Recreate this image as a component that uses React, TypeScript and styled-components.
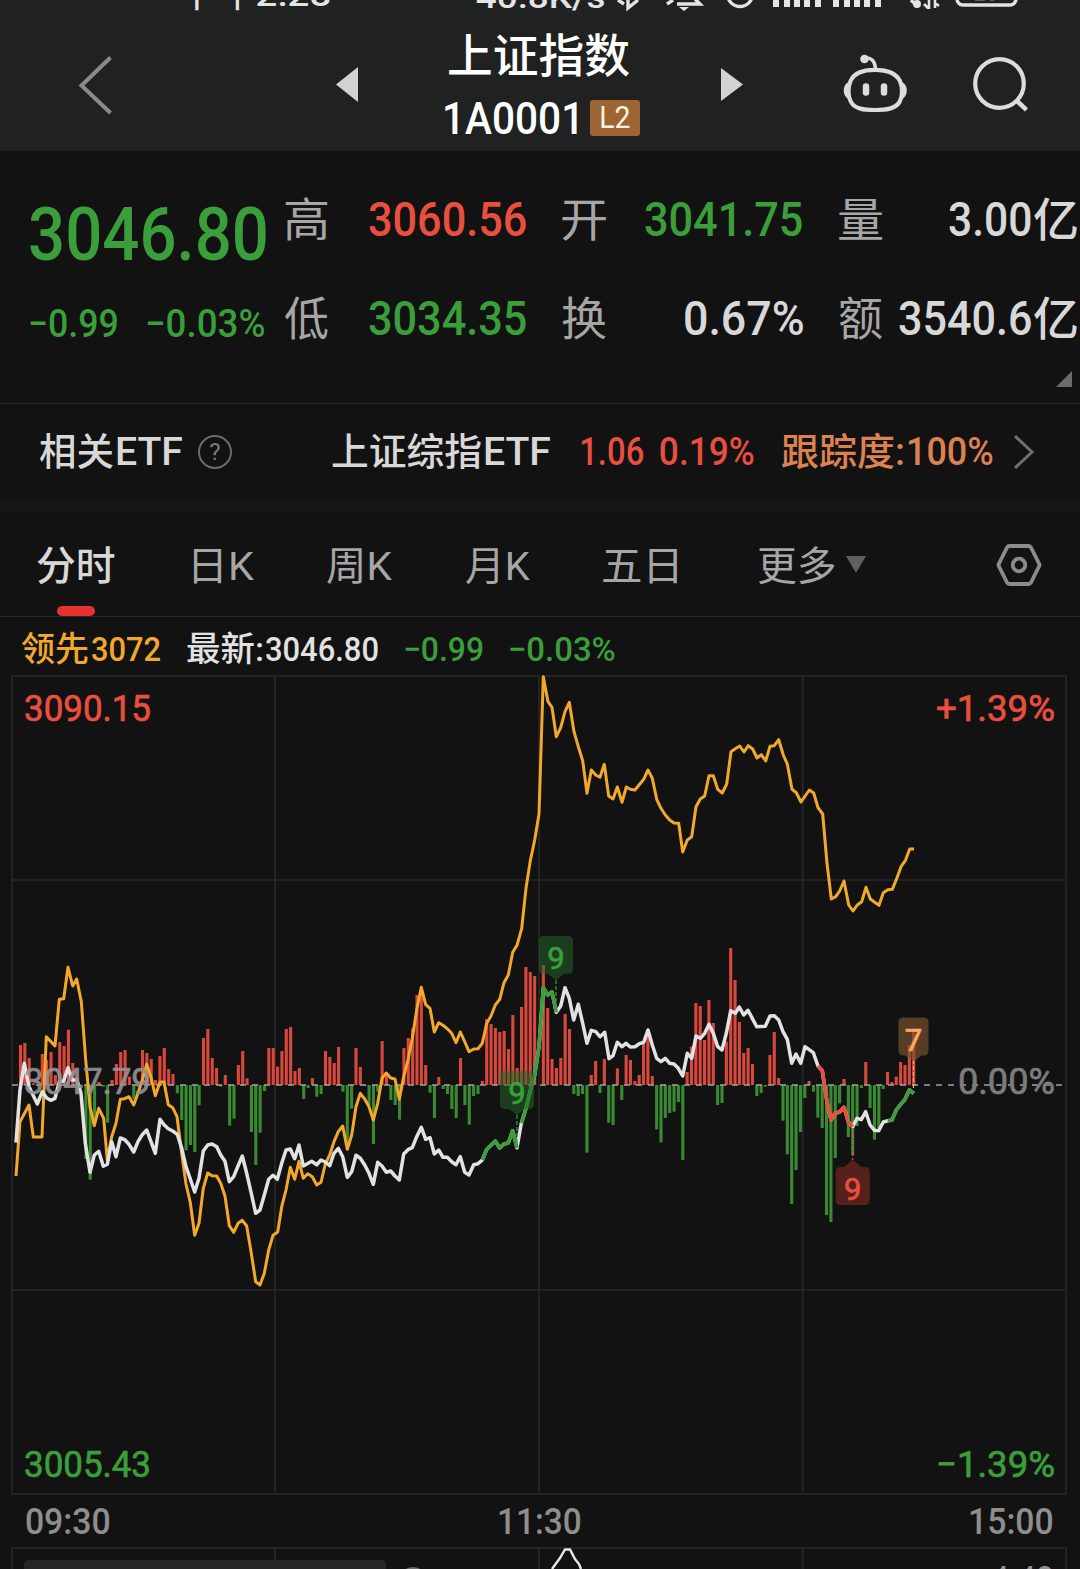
import React, { useLayoutEffect, useRef, useState } from "react";
import styled, { createGlobalStyle } from "styled-components";

const color = {
  bg: "#121212",
  header: "#202221",
  line: "#2a2a2a",
  red: "#e94f3e",
  green: "#3a9f3a",
  bright: "#d8d8d8",
  muted: "#a6a6a6",
  gold: "#f2a92b",
  copper: "#dc8150",
};

const GlobalStyle = createGlobalStyle`
  * { box-sizing: border-box; }
  body {
    margin: 0;
    background: ${color.bg};
    font-family: Roboto, "Noto Sans CJK SC", sans-serif;
    overflow: hidden;
  }
  svg { display: block; flex: none; }
`;

/* ---------- text set to a fixed ink width ---------- */

const FitBox = styled.span<{ $w: number; $size: number; $ml?: number; $color?: string; $weight?: number }>`
  flex: none;
  display: block;
  width: ${(p) => p.$w}px;
  margin-left: ${(p) => p.$ml ?? 0}px;
  padding-top: 2px;
  font-size: ${(p) => p.$size}px;
  line-height: 1.2;
  font-weight: ${(p) => p.$weight ?? 400};
  color: ${(p) => p.$color ?? "inherit"};
  white-space: nowrap;
`;

const FitInk = styled.span`
  display: inline-block;
  transform-origin: 0 50%;
`;

interface FitProps {
  w: number;
  size: number;
  ml?: number;
  color?: string;
  weight?: number;
  children: string;
}

function Fit({ w, size, ml, color: c, weight, children }: FitProps) {
  const ref = useRef<HTMLSpanElement>(null);
  const [transform, setTransform] = useState("none");
  useLayoutEffect(() => {
    const el = ref.current;
    const ctx = document.createElement("canvas").getContext("2d");
    if (!el || !ctx) return;
    const cs = getComputedStyle(el);
    ctx.font = `${cs.fontWeight} ${cs.fontSize} ${cs.fontFamily}`;
    const m = ctx.measureText(children);
    const ink = m.actualBoundingBoxRight + m.actualBoundingBoxLeft;
    const k = w / ink;
    const nudge = /^[\d−]/.test(children) ? 0.8 : 0;
    setTransform(`translateX(${m.actualBoundingBoxLeft * k + nudge}px) scaleX(${k})`);
  }, [w, size, weight, children]);
  return (
    <FitBox $w={w} $size={size} $ml={ml} $color={c} $weight={weight}>
      <FitInk ref={ref} style={{ transform }}>
        {children}
      </FitInk>
    </FitBox>
  );
}

/* ---------- layout parts ---------- */

const Screen = styled.main`
  width: 1080px;
  height: 1569px;
  overflow: hidden;
  display: flex;
  flex-direction: column;
  background: ${color.bg};
`;

const StatusBar = styled.div`
  flex: none;
  height: 11px;
  overflow: hidden;
  display: flex;
  align-items: flex-end;
  background: ${color.header};
  color: #e4e4e4;
`;

const StatusText = styled.div<{ $ml: number }>`
  flex: none;
  display: flex;
  margin-left: ${(p) => p.$ml}px;
  margin-bottom: -5px;
`;

const StatusIcons = styled.svg`
  margin-left: 6px;
`;

const Header = styled.header`
  flex: none;
  height: 140px;
  display: flex;
  align-items: flex-start;
  background: ${color.header};
`;

const IconSlot = styled.button<{ $ml: number; $mt: number }>`
  flex: none;
  padding: 0;
  border: 0;
  background: none;
  margin: ${(p) => p.$mt}px 0 0 ${(p) => p.$ml}px;
`;

const TitleBlock = styled.div`
  flex: none;
  width: 200px;
  margin-left: 84px;
  padding-top: 16px;
  color: #fff;
`;

const CodeRow = styled.div`
  height: 54px;
  margin-top: 7px;
  display: flex;
  align-items: center;
`;

const LevelBadge = styled.span`
  flex: none;
  width: 50px;
  height: 36px;
  margin-left: 14px;
  padding-bottom: 3px;
  display: flex;
  align-items: center;
  border-radius: 3px;
  background: #9e6434;
`;

const Quote = styled.section`
  flex: none;
  height: 253px;
  padding-top: 19px;
  border-bottom: 1px solid ${color.line};
  display: flex;
  flex-wrap: nowrap;
`;

const PriceColumn = styled.div`
  flex: none;
  width: 284px;
  padding-left: 29px;
`;

const BigPrice = styled.div`
  height: 125px;
  display: flex;
  align-items: center;
`;

const ChangeRow = styled.div`
  height: 56px;
  display: flex;
  align-items: center;
`;

const Stats = styled.div`
  flex: none;
  width: 796px;
`;

const StatRow = styled.div`
  height: 99px;
  display: flex;
  align-items: center;
`;

const MoreCorner = styled.div`
  display: flex;
  justify-content: flex-end;
  padding: 3px 8px 0 0;
`;

const EtfRow = styled.section`
  flex: none;
  height: 96px;
  display: flex;
  align-items: center;
  padding-left: 39px;
`;

const EtfArrow = styled.svg`
  margin-left: 19px;
`;

const Help = styled.span`
  flex: none;
  width: 34px;
  height: 34px;
  margin-left: 16px;
  border: 2px solid #6c6c6c;
  border-radius: 50%;
  display: flex;
  align-items: center;
  justify-content: center;
  font-size: 24px;
  color: #7c7c7c;
`;

const Divider = styled.div`
  flex: none;
  height: 13px;
  background: #171717;
`;

const Tabs = styled.nav`
  flex: none;
  height: 104px;
  display: flex;
  align-items: stretch;
  border-bottom: 1px solid ${color.line};
`;

const Tab = styled.div<{ $ml: number; $active?: boolean }>`
  flex: none;
  margin-left: ${(p) => p.$ml}px;
  display: flex;
  flex-direction: column;
  align-items: center;
  justify-content: space-between;
  padding-top: 28px;
  color: ${(p) => (p.$active ? color.bright : color.muted)};
`;

const TabMark = styled.span`
  width: 38px;
  height: 10px;
  border-radius: 5px;
  background: #e83232;
`;

const TabIcon = styled.span<{ $ml: number }>`
  display: flex;
  align-items: center;
  margin-left: ${(p) => p.$ml}px;
`;

const Legend = styled.div`
  flex: none;
  height: 53px;
  padding: 10px 0 0 21px;
  display: flex;
  align-items: flex-start;
`;

const TimeAxis = styled.div`
  flex: none;
  height: 43px;
  display: flex;
  align-items: center;
  color: #8e8e8e;
`;

const ChartLabel = styled.text<{ $size?: number }>`
  font-family: Roboto, sans-serif;
  font-size: ${(p) => p.$size ?? 37}px;
`;

/* ---------- chart data ---------- */

// One entry per minute; positive bars rise from the zero line, negative fall (thirds of a pixel).
const volumes = [
  0, 120, 126, 81, 5, 0, 93, 75, 99, 30, 129, 117, 166, 66, 20, 0, -222, -284, -105, 9, -5, -113, 15, 63, 99, 105, 25,
  -42, -5, 105, 96, 78, 15, 87, 111, 48, 33, -25, -105, -196, -180, -201, -61, 141, 168, 81, 51, -5, 30, -122, -101, 60,
  102, 20, -141, -240, -143, -18, 111, 111, 55, 102, 168, 174, 42, 51, -42, -9, 21, -35, -27, 102, 84, 66, 114, -20,
  -180, -71, 111, 54, -3, -60, -177, -20, 132, 36, -45, -60, -104, 111, 141, 170, 270, 280, 60, -23, -99, 24, -12, -27,
  -72, -99, 81, -60, -119, -33, -27, 12, 198, 183, 171, 159, 162, 108, 210, 51, 234, 354, 339, 327, 0, 360, 231, 78, 51,
  81, 213, 168, -27, -33, -27, -203, 30, 72, -24, 78, -113, -120, 50, -45, 90, 75, 12, 30, 123, 150, 27, -133, -172,
  -99, -84, -80, -51, -225, 39, 115, 246, 237, 135, 255, 186, -60, -54, 130, 411, 315, 189, 96, 111, 63, -33, -24, -5,
  90, 159, 21, -107, -208, -357, -255, -141, -39, 12, -20, -98, -129, -390, -411, -219, -55, 18, -156, -210, -123, -9,
  69, -69, -164, -129, -12, 39, 9, 25, 69, 60, 120, 160,
];

const ZERO = 1085;
const minuteX = (i: number) => 16 + i * 4.357;

// A trace piece holds its origin and its points, in thirds of a pixel from that origin.
type Piece = [number, number, string];
const trace = (pieces: Piece[]) =>
  pieces
    .flatMap(([ox, oy, pts]) =>
      pts.split(" ").map((p) => {
        const [x, y] = p.split(",").map(Number);
        return `${(ox + x / 3).toFixed(1)},${(oy + y / 3).toFixed(1)}`;
      })
    )
    .join(" ");

const leadLine = trace([
  [0, 940, "48,708 60,545 87,495 100,591 126,591 139,290 165,318 178,178 191,176 204,82 218,138 230,117 244,185 257,360 270,500 283,557 296,505 311,535 322,660 335,590 348,550 361,478 374,476 387,470 401,495 414,460 427,420 440,373 453,412 466,467 480,426 492,426 505,494 518,503 531,530 545,640 558,732 571,788 584,886 597,850 610,745 623,699 636,707 650,708 662,730 675,768 688,857 701,877 714,850 727,841 740,858 754,940 767,1025 780,1035 793,1000 806,930 819,886"],
  [270, 960, "23,816 35,740 48,690 61,622 74,658 87,604 100,655 113,641 127,650 140,675 153,667 166,612 179,585 192,545 205,515 218,498 232,568 245,525 258,440 271,400 284,417 297,440 310,480 323,430 336,355 349,339 362,354 375,357 388,418 401,350 414,300 427,235 440,150 454,82 467,134 480,145 493,216 506,188 519,196 532,206 545,220 558,248 571,216 584,245 597,275 611,267 624,266 637,250 650,190 663,168 676,135 689,118 702,68"],
  [500, 670, "25,915 38,847 51,826 65,775 78,655 91,572 104,510 117,432 130,20 144,95 156,112 169,200 182,173 195,125 208,97 222,185 235,230 248,272 261,370 274,300 287,315 300,322 313,283 326,378 339,387 352,351 366,397 379,351 391,358 405,360 431,328 444,300 457,325 470,388 483,415 496,435 509,450 522,459 536,460 548,546 562,510 575,500 588,410 601,387 614,378 627,317 640,317 653,358 667,369 680,342 693,245 706,236 719,228 732,246 745,227 758,237 771,264 784,254 797,273"],
  [700, 670, "210,229 223,227 236,209 250,255 262,282 276,358 289,368 303,396 328,360 341,369 354,413 368,432 381,580 394,687 407,680 419,663 432,633 446,705 459,723 472,705 485,695 498,652 511,687 524,697 537,706 550,668 563,659 577,658 590,626 603,590 616,572 629,537 642,537"],
]);

const priceLine = trace([
  [0, 940, "48,608 60,450 73,370 87,440 112,492 127,455 140,474 152,481 165,475 178,425 191,423 204,383 217,420 231,420 243,460 256,610 270,697 283,645 296,634 310,679 322,673 335,605 348,650 361,594 374,599 387,613 401,636 414,605 427,584 440,570 453,605 466,640 480,538 492,554 505,566 518,573 532,583 545,625 558,680 571,717 584,756 597,715 610,633 623,615 636,612 650,620 662,645 675,664 688,725 701,710 714,678 727,648 740,700 754,760 767,820 780,810 793,765 806,718 819,706"],
  [270, 960, "9,646 22,658 35,610 48,570 61,567 74,596 87,555 100,618 125,604 140,614 153,600 166,606 179,617 192,580 205,565 218,590 232,652 245,635 258,586 271,595 284,615 297,640 310,673 323,607 336,618 349,637 362,633 375,648 388,660 401,582 414,569 427,563 440,530 454,502 467,538 480,533 493,582 506,570 519,592 532,592 545,605 558,614 571,590 584,637 597,645 611,614 624,611 637,600 650,568 663,556 676,543 689,564 702,552 715,549 728,512 741,563 754,490"],
  [500, 930, "78,535 91,482 104,435 117,350 130,173 143,195 156,186 169,247 182,228 195,173 208,205 221,270 235,223 248,280 261,340 274,301 287,305 300,320 314,307 327,386 339,377 352,337 366,350 378,340 391,351 405,350 418,341 431,337 444,300 457,345 470,385 483,395 496,385 509,400 522,402 535,415 548,438 562,370 575,385 588,318 601,325 614,310 627,283 640,310 653,350 666,360 679,310 692,242 706,250"],
  [720, 920, "58,261 71,285 84,271 97,295 110,320 136,319 150,288 163,287 176,300 189,335 202,358 215,430 228,402 242,430 255,380 280,398 294,438 307,452 320,540 333,600 346,580 359,576 372,562 385,605 398,620 411,595 424,599 437,575 450,614 463,631 476,632 490,606 503,602 516,600 529,570 542,553 555,538 568,510 581,520"],
]);

const signalLines = [
  { stroke: color.green, points: trace([[270, 960, "637,600 650,568 663,556 676,543 689,564 702,552 715,549 728,512 741,563"]]) },
  { stroke: color.green, points: trace([[500, 930, "65,580 78,535 91,482 104,435 117,350 130,173 143,195 156,186 169,247"]]) },
  { stroke: color.red, points: trace([[720, 920, "294,438 307,452 320,540 333,600 346,580 359,576 372,562 385,605 398,620"]]) },
  { stroke: color.green, points: trace([[720, 920, "503,602 516,600 529,570 542,553 555,538 568,510 581,520"]]) },
];

interface MarkerProps {
  x: number;
  top: number;
  w?: number;
  label: string;
  ink: string;
  fill: string;
  stem: [number, number];
  up?: boolean;
}

function Marker({ x, top, w = 34, label, ink, fill, stem, up }: MarkerProps) {
  const l = x - w / 2;
  const r = x + w / 2;
  const b = top + 38;
  const d = up
    ? `M${l + 5} ${top}H${x - 9}L${x} ${top - 7}L${x + 9} ${top}H${r - 5}q5 0 5 5V${b - 5}q0 5 -5 5H${l + 5}q-5 0 -5 -5V${top + 5}q0 -5 5 -5z`
    : `M${l + 5} ${top}H${r - 5}q5 0 5 5V${b - 5}q0 5 -5 5H${x + 8}L${x} ${b + 6}L${x - 8} ${b}H${l + 5}q-5 0 -5 -5V${top + 5}q0 -5 5 -5z`;
  return (
    <g>
      <path d={`M${x} ${stem[0]}V${stem[1]}`} stroke={ink} strokeWidth="1.2" strokeDasharray="4 2" />
      <path d={d} fill={fill} />
      <ChartLabel $size={31} x={x} y={top + 33} textAnchor="middle" fill={ink} stroke={ink} strokeWidth="0.7">
        {label}
      </ChartLabel>
    </g>
  );
}

interface ScaleLabelProps {
  x: number;
  y: number;
  w: number;
  ink: string;
  opacity?: number;
  children: string;
}

function ScaleLabel({ x, y, w, ink, opacity = 1, children }: ScaleLabelProps) {
  return (
    <ChartLabel x={x} y={y} textLength={w} lengthAdjust="spacingAndGlyphs" fill={ink} stroke={ink} strokeWidth="0.7" opacity={opacity}>
      {children}
    </ChartLabel>
  );
}

function MinuteChart() {
  return (
    <svg width="1080" height="830" viewBox="0 670 1080 830">
      <g stroke="#282828" strokeWidth="1.6" fill="none">
        <rect x="12" y="676" width="1054" height="818" />
        <path d="M12 880H1066M12 1290H1066M275 676V1494M539 676V1494M802.7 676V1494" />
      </g>
      {volumes.map((v, i) =>
        v ? (
          <rect
            key={i}
            x={minuteX(i) - 1.4}
            width="3.1"
            y={v > 0 ? ZERO - v / 3 : ZERO}
            height={Math.abs(v) / 3}
            fill={v > 0 ? "#d8483c" : "#398a32"}
          />
        ) : null
      )}
      <path d="M12 1085H1062" stroke="#a2a2a2" strokeWidth="1.5" strokeDasharray="6 6" />
      <g fill="none" strokeLinejoin="round">
        <polyline points={leadLine} stroke={color.gold} strokeWidth="3" />
        <polyline points={priceLine} stroke="#e2e2e2" strokeWidth="3.5" />
        {signalLines.map((s, i) => (
          <polyline key={i} points={s.points} stroke={s.stroke} strokeWidth="3.6" />
        ))}
      </g>
      <ScaleLabel x={24} y={721} w={127} ink={color.red}>3090.15</ScaleLabel>
      <ScaleLabel x={936} y={721} w={119} ink={color.red}>+1.39%</ScaleLabel>
      <ScaleLabel x={24} y={1093.5} w={127} ink="#949494" opacity={0.9}>3047.79</ScaleLabel>
      <ScaleLabel x={958} y={1093.5} w={97} ink="#7c7c7c">0.00%</ScaleLabel>
      <ScaleLabel x={24} y={1477} w={127} ink={color.green}>3005.43</ScaleLabel>
      <ScaleLabel x={936} y={1477} w={119} ink={color.green}>−1.39%</ScaleLabel>
      <Marker x={556} top={936} label="9" ink={color.green} fill="rgba(36,106,42,.52)" stem={[980, 1012]} />
      <Marker x={517} top={1071} label="9" ink={color.green} fill="rgba(36,106,42,.52)" stem={[1115, 1148]} />
      <Marker x={852.7} top={1167} label="9" ink={color.red} fill="#56211c" stem={[1128, 1160]} up />
      <Marker x={913.5} top={1017.5} w={30} label="7" ink="#ffa862" fill="rgba(122,82,48,.68)" stem={[1060, 1090]} />
    </svg>
  );
}

/* ---------- screen ---------- */

export default function App() {
  return (
    <>
      <GlobalStyle />
      <Screen>
        <StatusBar>
          <StatusText $ml={179}>
            <Fit w={77} size={33}>下午</Fit>
            <Fit w={73} size={32} weight={500}>2:28</Fit>
          </StatusText>
          <StatusText $ml={146}>
            <Fit w={129} size={32} weight={500}>40.8K/s</Fit>
          </StatusText>
          <StatusIcons width="470" height="11" viewBox="610 0 470 11" fill="none" stroke="#e4e4e4" strokeWidth="3.4">
            <path d="M618 0L624 4M628 0V8L638 0" />
            <path d="M667 4L673 0M677 4H700L695 -1" />
            <path d="M679 7H689L684 11Z" fill="#e4e4e4" stroke="none" />
            <circle cx="740" cy="-6" r="12.5" />
            <path d="M776 0V7M787 0V7M797 0V7M807 0V7M818 0V7M836 0V7M847 0V7M857 0V7M867 0V7M878 0V7" strokeWidth="6" />
            <path d="M911 0L914 3" />
            <circle cx="917" cy="4" r="4" fill="#e4e4e4" stroke="none" />
            <path d="M929 0V9M935 0V8M924 4L928 8M934 2L939 6" strokeWidth="2.6" />
            <rect x="957" y="-20" width="59" height="25" rx="6" />
            <path d="M975 0H985M990 0L994 0" strokeWidth="1.5" stroke="#777" />
          </StatusIcons>
        </StatusBar>

        <Header>
          <IconSlot $ml={78} $mt={43} aria-label="返回">
            <svg width="36" height="62" viewBox="78 54 36 62" fill="none" stroke="#8a8a8a" strokeWidth="4">
              <path d="M110.5 57.5L81.5 85.5L110.5 113" />
            </svg>
          </IconSlot>
          <IconSlot $ml={222} $mt={56} aria-label="上一个">
            <svg width="22" height="35" viewBox="0 0 22 35" fill="#d2d2d2">
              <path d="M22 0V35L0 17.5Z" />
            </svg>
          </IconSlot>
          <TitleBlock>
            <Fit w={180} size={46} weight={500} ml={7}>上证指数</Fit>
            <CodeRow>
              <Fit w={132} size={44} weight={500} ml={2}>1A0001</Fit>
              <LevelBadge>
                <Fit w={29} size={31} ml={11} color="#fff3e0">L2</Fit>
              </LevelBadge>
            </CodeRow>
          </TitleBlock>
          <IconSlot $ml={79} $mt={57} aria-label="下一个">
            <svg width="22" height="33" viewBox="0 0 22 33" fill="#d2d2d2">
              <path d="M0 0L22 16.5L0 33Z" />
            </svg>
          </IconSlot>
          <IconSlot $ml={99} $mt={42} aria-label="助手">
            <svg width="66" height="62" viewBox="842 53 66 62" fill="none" stroke="#dcdcdc" strokeWidth="4.2">
              <circle cx="864.5" cy="59" r="4.3" fill="#dcdcdc" stroke="none" />
              <path d="M864 58.5C871 56.5 875 61 875.5 69" strokeWidth="3.6" />
              <path d="M875 69.8C862 69.8 854 73 850.5 81C847.5 88 848 97 851 102C855 109 864 110 875 110C886 110 895 109 899.5 102C902.5 97 903 88 900 81C896 73 888 69.8 875 69.8Z" />
              <path d="M849 82C842 84 842 97 849 99Z" fill="#dcdcdc" stroke="none" />
              <path d="M901.5 82C908.5 84 908.5 97 901.5 99Z" fill="#dcdcdc" stroke="none" />
              <path d="M866 86.5V92.5M884 86.5V92.5" strokeWidth="6.5" strokeLinecap="round" />
            </svg>
          </IconSlot>
          <IconSlot $ml={63} $mt={44} aria-label="搜索">
            <svg width="60" height="60" viewBox="971 55 60 60" fill="none" stroke="#dcdcdc" strokeWidth="4.2">
              <circle cx="999.5" cy="83.5" r="24.3" />
              <path d="M1017 101L1026.5 109.8" strokeWidth="4.5" />
            </svg>
          </IconSlot>
        </Header>

        <Quote>
          <PriceColumn>
            <BigPrice>
              <Fit w={236} size={75} weight={500} color={color.green}>3046.80</Fit>
            </BigPrice>
            <ChangeRow>
              <Fit w={87} size={39} weight={500} color={color.green}>−0.99</Fit>
              <Fit w={117} size={39} weight={500} ml={30} color={color.green}>−0.03%</Fit>
            </ChangeRow>
          </PriceColumn>
          <Stats>
            <StatRow>
              <Fit w={43} size={46} ml={1} color={color.muted}>高</Fit>
              <Fit w={157} size={49} weight={500} ml={40} color={color.red}>3060.56</Fit>
              <Fit w={44} size={46} ml={37} color={color.muted}>开</Fit>
              <Fit w={157} size={49} weight={500} ml={38} color={color.green}>3041.75</Fit>
              <Fit w={43} size={46} ml={38} color={color.muted}>量</Fit>
              <Fit w={82} size={49} weight={500} ml={66} color={color.bright}>3.00</Fit>
              <Fit w={43} size={46} weight={500} ml={4} color={color.bright}>亿</Fit>
            </StatRow>
            <StatRow>
              <Fit w={43} size={46} ml={1} color={color.muted}>低</Fit>
              <Fit w={157} size={49} weight={500} ml={40} color={color.green}>3034.35</Fit>
              <Fit w={44} size={46} ml={37} color={color.muted}>换</Fit>
              <Fit w={118} size={49} weight={500} ml={78} color={color.bright}>0.67%</Fit>
              <Fit w={43} size={46} ml={37} color={color.muted}>额</Fit>
              <Fit w={132} size={49} weight={500} ml={16} color={color.bright}>3540.6</Fit>
              <Fit w={43} size={46} weight={500} ml={4} color={color.bright}>亿</Fit>
            </StatRow>
            <MoreCorner>
              <svg width="16" height="16" viewBox="0 0 16 16" fill="#6c6c6c">
                <path d="M16 0V16H0Z" />
              </svg>
            </MoreCorner>
          </Stats>
        </Quote>

        <EtfRow>
          <Fit w={74} size={38} weight={500} color={color.bright}>相关</Fit>
          <Fit w={65} size={38} weight={500} ml={4} color={color.bright}>ETF</Fit>
          <Help>?</Help>
          <Fit w={149} size={38} weight={500} ml={100} color={color.bright}>上证综指</Fit>
          <Fit w={65} size={38} weight={500} ml={4} color={color.bright}>ETF</Fit>
          <Fit w={62} size={38} weight={500} ml={31} color={color.red}>1.06</Fit>
          <Fit w={94} size={38} weight={500} ml={16} color={color.red}>0.19%</Fit>
          <Fit w={121} size={38} weight={500} ml={29} color={color.copper}>跟踪度:</Fit>
          <Fit w={84} size={38} weight={500} ml={5} color={color.copper}>100%</Fit>
          <EtfArrow width="24" height="38" viewBox="-3 -3 24 38" fill="none" stroke="#707070" strokeWidth="3">
            <path d="M1 0L18 16L1 32" />
          </EtfArrow>
        </EtfRow>
        <Divider />

        <Tabs>
          <Tab $ml={37} $active>
            <Fit w={78} size={39.5} weight={500}>分时</Fit>
            <TabMark />
          </Tab>
          <Tab $ml={78}>
            <Fit w={61} size={39.5}>日K</Fit>
          </Tab>
          <Tab $ml={73}>
            <Fit w={65} size={39.5}>周K</Fit>
          </Tab>
          <Tab $ml={74}>
            <Fit w={64} size={39.5}>月K</Fit>
          </Tab>
          <Tab $ml={73}>
            <Fit w={74} size={39.5}>五日</Fit>
          </Tab>
          <Tab $ml={81}>
            <Fit w={77} size={39.5}>更多</Fit>
          </Tab>
          <TabIcon $ml={11}>
            <svg width="20" height="17" viewBox="0 0 20 17" fill="#606060">
              <path d="M0 0H20L10 17Z" />
            </svg>
          </TabIcon>
          <TabIcon $ml={130}>
            <svg width="46" height="44" viewBox="0 0 46 44" fill="none" stroke="#8c8c8c" strokeWidth="3.8" strokeLinejoin="round">
              <path d="M13.5 3H32.5Q34 3 35 4.5L43 20.5Q44 22 43 23.5L35 39.5Q34 41 32.5 41H13.5Q12 41 11 39.5L3 23.5Q2 22 3 20.5L11 4.5Q12 3 13.5 3Z" />
              <circle cx="23" cy="22" r="6.3" />
            </svg>
          </TabIcon>
        </Tabs>

        <Legend>
          <Fit w={67} size={34} weight={500} color={color.gold}>领先</Fit>
          <Fit w={69} size={34} ml={3} weight={500} color={color.gold}>3072</Fit>
          <Fit w={75} size={34} ml={27} weight={500} color="#e2e2e2">最新:</Fit>
          <Fit w={112} size={34} ml={3} weight={500} color="#e2e2e2">3046.80</Fit>
          <Fit w={78} size={34} ml={27} weight={500} color={color.green}>−0.99</Fit>
          <Fit w={105} size={34} ml={27} weight={500} color={color.green}>−0.03%</Fit>
        </Legend>

        <MinuteChart />

        <TimeAxis>
          <Fit w={84} size={37} weight={500} ml={25}>09:30</Fit>
          <Fit w={81} size={37} weight={500} ml={390}>11:30</Fit>
          <Fit w={82} size={37} weight={500} ml={390}>15:00</Fit>
        </TimeAxis>

        <svg width="1080" height="26" viewBox="0 1543 1080 26">
          <path d="M12 1569V1548H1066V1569M275 1548V1569M539 1548V1569M802.7 1548V1569" stroke="#282828" strokeWidth="1.6" fill="none" />
          <rect x="24" y="1560" width="362" height="30" rx="5" fill="#262626" />
          <circle cx="413" cy="1581" r="14" fill="#6a6a6a" />
          <polyline points="552,1569 560,1558 565,1549.5 570,1549.5 575,1559 579,1564 581,1569" fill="none" stroke="#e6e6e6" strokeWidth="2.4" />
          <ChartLabel x="991" y="1592" textLength="63" lengthAdjust="spacingAndGlyphs" fill="#8e8e8e">4.48</ChartLabel>
        </svg>
      </Screen>
    </>
  );
}
